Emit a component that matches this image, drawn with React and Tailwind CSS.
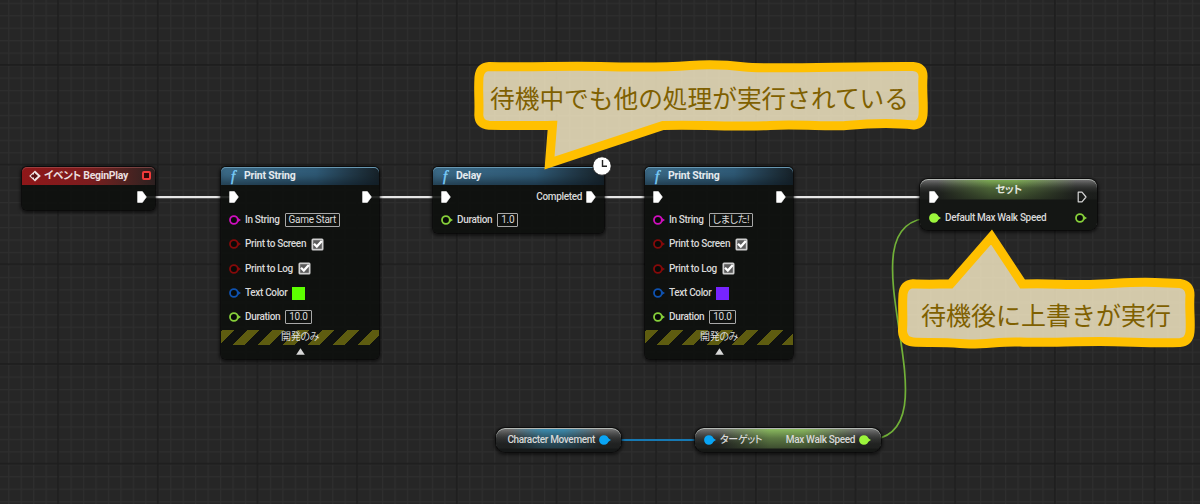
import clsx from "clsx";

const PIN_COLORS = {
  string: "#cf0fbe",
  bool: "#850a0a",
  struct: "#0f52b0",
  float: "#86cf3a",
  object: "#0aa5f5",
};

function ExecPin({ hollow = false }) {
  return (
    <svg width="10" height="12" viewBox="0 0 10 12" className="shrink-0">
      <path
        d={hollow ? "M1.2 1.2H5L9 6L5 10.8H1.2Z" : "M0.6 0.6H5.4L9.4 6L5.4 11.4H0.6Z"}
        fill={hollow ? "none" : "#ffffff"}
        stroke={hollow ? "#d6d6d6" : "#ffffff"}
        strokeWidth={hollow ? 1.2 : 0.6}
        strokeLinejoin="round"
      />
    </svg>
  );
}

function DataPin({ type, connected = false }) {
  const color = connected && type === "float" ? "#9cf53c" : PIN_COLORS[type];

  return (
    <svg width="12" height="10" viewBox="0 0 12 10" className="shrink-0">
      <circle
        cx="4.9"
        cy="5"
        r="3.9"
        fill={connected ? color : "#080a08"}
        stroke={color}
        strokeWidth="1.8"
      />
      <path d="M8.8 2.9L12 5L8.8 7.1Z" fill={color} />
    </svg>
  );
}

function ValueBox({ children }) {
  return (
    <span className="flex h-[14px] items-center whitespace-nowrap rounded-[1px] border border-[#a8a8a8] px-[3px] font-normal tracking-[-0.3px] text-[#dadada]">
      {children}
    </span>
  );
}

function Checkbox() {
  return (
    <svg width="13" height="13" viewBox="0 0 13 13" className="shrink-0">
      <rect x="0.5" y="0.5" width="12" height="12" rx="1.5" fill="#cfcfcf" />
      <rect x="2.2" y="2.2" width="8.6" height="8.6" fill="#5c5c5c" />
      <path d="M3 5.8L5.8 8.6L10.8 3" fill="none" stroke="#ffffff" strokeWidth="2.3" />
    </svg>
  );
}

function FunctionHeader({ title }) {
  return (
    <div className="flex h-[18px] items-center rounded-t-[5px] bg-linear-to-r from-[#3c6b88] via-[#2f5a76] via-60% to-[#172229] pl-[10px] shadow-[inset_0_1px_0_#6796b0,inset_0_-8px_8px_-3px_#0f1a2490]">
      <span className="w-[13px] font-['Liberation_Serif',serif] text-[15px] italic leading-none text-[#7accfa] [-webkit-text-stroke:0.4px_#7accfa]">
        f
      </span>
      <span className="text-[10.5px] font-bold tracking-[-0.2px] text-[#e4eaee]">{title}</span>
    </div>
  );
}

function Row({ type, label, children }) {
  return (
    <div className="flex h-[24.3px] items-center">
      <DataPin type={type} />
      <span className="ml-[4px] mr-[5px] whitespace-nowrap">{label}</span>
      {children}
    </div>
  );
}

const nodeClass =
  "absolute rounded-[6px] border border-black/70 bg-[#0d0f0d]/90 bg-clip-padding shadow-[0_1px_3px_1px_#00000080]";

function PrintStringNode({ className, value, swatch }) {
  return (
    <div className={clsx(nodeClass, "top-[166px] h-[194px]", className)}>
      <FunctionHeader title="Print String" />
      <div className="flex h-[23px] items-center justify-between pl-[8px] pr-[7px] pt-px">
        <ExecPin />
        <ExecPin />
      </div>
      <div className="pl-[8px]">
        <Row type="string" label="In String">
          <ValueBox>{value}</ValueBox>
        </Row>
        <Row type="bool" label="Print to Screen">
          <Checkbox />
        </Row>
        <Row type="bool" label="Print to Log">
          <Checkbox />
        </Row>
        <Row type="struct" label="Text Color">
          <span className={clsx("size-[13px]", swatch)} />
        </Row>
        <Row type="float" label="Duration">
          <ValueBox>10.0</ValueBox>
        </Row>
      </div>
      <div className="mt-[0.5px] flex h-[15px] items-center justify-center bg-[repeating-linear-gradient(135deg,transparent_0px,transparent_0.9px,#5e5c10_0.9px,#5e5c10_9.6px,transparent_9.6px,transparent_17.7px)] font-normal text-[#dcdcdc]">
        開発のみ
      </div>
      <svg width="9" height="7" viewBox="0 0 9 7" className="mx-auto mt-[3px]">
        <path d="M4.5 0.3L8.8 6.7H0.2Z" fill="#d8d8d8" />
      </svg>
    </div>
  );
}

function Wires() {
  return (
    <svg width="1200" height="504" className="absolute inset-0" fill="none">
      <g stroke="#e6e6e6" strokeWidth="2.2">
        <path d="M145 197.2H232" />
        <path d="M368 197.2H444" />
        <path d="M594 197.2H656" />
        <path d="M783 197.2H930" />
      </g>
      <path d="M606 440H708" stroke="#1779b3" strokeWidth="1.8" />
      <path d="M866 440C966 440 832 218 932 218" stroke="#71b038" strokeWidth="1.7" />
    </svg>
  );
}

function Callouts() {
  return (
    <svg
      width="1200"
      height="504"
      className="absolute inset-0"
      fill="#fff2cc"
      fillOpacity="0.8"
      stroke="#ffc000"
      strokeWidth="9"
    >
      <path d="M489 66.5C540 67.5 560 65.5 600 66.5S670 67 690 65.5S725 64.5 745 67S860 66 913 66.5Q923.5 67.5 923 77C922 92 924 103 923 115Q922 124.5 914 125C890 122 862 124 846 125.5S800 124 770 125.5S700 124.5 663 125.5L549.5 163L552.5 125.3C530 126 510 125.5 489 125.3Q479 124.5 478.8 115C479.5 100 478 92 479 77Q480 67 489 66.5Z" />
      <path d="M913 283.8C925 284.5 938 284 950.5 284L991.5 237L1022.5 284C1050 283 1065 285 1090 284.5S1130 281.5 1155 282.5L1180 283.5Q1190 285 1190 295C1189 310 1191 320 1190 332Q1189 342 1180 342.5C1150 343.5 1130 341.5 1100 341.5S1040 343 1020 342S980 345.5 960 343.5S925 343 913 342Q903 341 902.5 331C903.5 315 902 308 903 294Q904 284.5 913 283.8Z" />
    </svg>
  );
}

const pillShadow = "shadow-[0_1px_3px_1px_#00000080,inset_0_1px_0_#b4b8b4]";

const calloutText =
  "absolute whitespace-nowrap font-['Noto_Sans_CJK_JP',sans-serif] leading-[30px] tracking-normal font-normal [font-feature-settings:normal] text-[#7f6000]";

export default function App() {
  return (
    <div className="relative h-[504px] w-[1200px] overflow-hidden bg-[#262626] font-[Roboto,'Noto_Sans_CJK_JP',sans-serif] text-[10px] font-medium leading-none tracking-[-0.34px] text-[#d8d8d8] [font-feature-settings:'palt']">
      {/* Graph grid */}
      <svg width="1200" height="504" className="absolute inset-0">
        <defs>
          <pattern id="minor" x="58" y="65" width="12.46" height="12.46" patternUnits="userSpaceOnUse">
            <path d="M0 0.6H12.46M0.6 0V12.46" stroke="#2e2e2e" strokeWidth="1.2" />
          </pattern>
          <pattern id="major" x="57.2" y="64" width="99.68" height="99.68" patternUnits="userSpaceOnUse">
            <path d="M0 1H99.68M1 0V99.68" stroke="#1c1c1c" strokeWidth="1.5" />
          </pattern>
        </defs>
        <rect width="1200" height="504" fill="url(#minor)" />
        <rect width="1200" height="504" fill="url(#major)" />
      </svg>

      <Wires />

      {/* Event BeginPlay */}
      <div className={clsx(nodeClass, "left-[21px] top-[166px] h-[45px] w-[135px]")}>
        <div className="flex h-[18px] items-center rounded-t-[5px] bg-linear-to-r from-[#8f1719] via-[#7c1c1e] via-50% to-[#2c2020] pl-[7px] pr-[4px] shadow-[inset_0_1px_0_#b0606080]">
          <svg width="12" height="12" viewBox="0 0 12 12" className="shrink-0">
            <path d="M6 0.4L11.8 6L6 11.6L0.2 6Z" fill="#f0e4e4" />
            <path d="M3.2 4.6H5V2.5L9 6L5 9.5V7.4H3.2L1.9 6Z" fill="#5c1012" />
          </svg>
          <span className="ml-[3px] whitespace-nowrap text-[10.5px] font-bold tracking-[-0.3px] text-[#eadede]">
            イベント BeginPlay
          </span>
          <span className="-mt-px ml-auto size-[9px] rounded-[2px] border-2 border-[#f03a3a] bg-[#300808]" />
        </div>
        <div className="flex h-[23px] items-center justify-end pr-[8px] pt-px">
          <ExecPin />
        </div>
      </div>

      <PrintStringNode className="left-[220px] w-[160px]" value="Game Start" swatch="bg-[#5dff00]" />

      {/* Delay */}
      <div className={clsx(nodeClass, "left-[432px] top-[166px] h-[68px] w-[173px]")}>
        <FunctionHeader title="Delay" />
        <div className="flex h-[23px] items-center pl-[8px] pr-[8px] pt-px">
          <ExecPin />
          <span className="ml-auto mr-[4px]">Completed</span>
          <ExecPin />
        </div>
        <div className="pl-[8px]">
          <Row type="float" label="Duration">
            <ValueBox>1.0</ValueBox>
          </Row>
        </div>
        <svg width="20" height="20" viewBox="0 0 20 20" className="absolute -right-[8px] -top-[11px]">
          <circle cx="10" cy="10" r="9.2" fill="#ffffff" stroke="#111111" strokeWidth="0.8" />
          <path d="M10.5 4V10.3H15" fill="none" stroke="#222222" strokeWidth="1.4" />
        </svg>
      </div>

      <PrintStringNode className="left-[644px] w-[150px]" value="しました!" swatch="bg-[#7724ff]" />

      {/* Set Default Max Walk Speed */}
      <div
        className={clsx(
          "absolute left-[919px] top-[178px] h-[53px] w-[179px] rounded-[9px] border border-black/70 bg-clip-padding",
          "bg-[linear-gradient(#16181600,#16181680_9px,#161816b8_20px,#141614_21px),linear-gradient(90deg,transparent_10%,#84b458_40%,#84b458_54%,transparent_88%),linear-gradient(#7c7c7c,#262826_14px)]",
          pillShadow
        )}
      >
        <div className="flex h-[22px] items-center justify-center text-[10.5px] font-bold text-[#e2e6de]">
          セット
        </div>
        <div className="-mt-[10px] flex h-[12px] items-center justify-between pl-[9px] pr-[10px]">
          <ExecPin />
          <ExecPin hollow />
        </div>
        <div className="mt-[5px] flex h-[19px] items-center pl-[9px] pr-[10px]">
          <DataPin type="float" connected />
          <span className="ml-[4px] whitespace-nowrap">Default Max Walk Speed</span>
          <span className="ml-auto">
            <DataPin type="float" />
          </span>
        </div>
      </div>

      {/* Variable getters */}
      <div
        className={clsx(
          "absolute left-[495px] top-[427px] flex h-[26px] w-[127px] items-center justify-end rounded-[10px] border border-black/70 bg-clip-padding pr-[10px]",
          "bg-[linear-gradient(#1a1c1c00,#1a1c1c80_10px,#1a1c1cb8_20px,#161818_21px),linear-gradient(90deg,transparent_12%,#3f93b8_38%,#3f93b8_54%,transparent_84%),linear-gradient(#808080,#2a2b2b_16px)]",
          pillShadow
        )}
      >
        <span className="mr-[4px] whitespace-nowrap">Character Movement</span>
        <DataPin type="object" connected />
      </div>
      <div
        className={clsx(
          "absolute left-[694px] top-[427px] flex h-[26px] w-[188px] items-center rounded-[10px] border border-black/70 bg-clip-padding pl-[9px] pr-[10px]",
          "bg-[linear-gradient(#1a1c1a00,#1a1c1a70_10px,#1a1c1ab0_20px,#161816_21px),linear-gradient(90deg,transparent_12%,#8fc062_40%,#8fc062_58%,transparent_88%),linear-gradient(#808080,#2a2b2a_16px)]",
          pillShadow
        )}
      >
        <DataPin type="object" connected />
        <span className="ml-[4px]">ターゲット</span>
        <span className="ml-auto mr-[4px] whitespace-nowrap">Max Walk Speed</span>
        <DataPin type="float" connected />
      </div>

      {/* Speech bubbles */}
      <Callouts />
      <p className={clsx(calloutText, "left-[490px] top-[82px] text-[24.7px]")}>
        待機中でも他の処理が実行されている
      </p>
      <p className={clsx(calloutText, "left-[921px] top-[299px] text-[25px]")}>
        待機後に上書きが実行
      </p>
    </div>
  );
}
